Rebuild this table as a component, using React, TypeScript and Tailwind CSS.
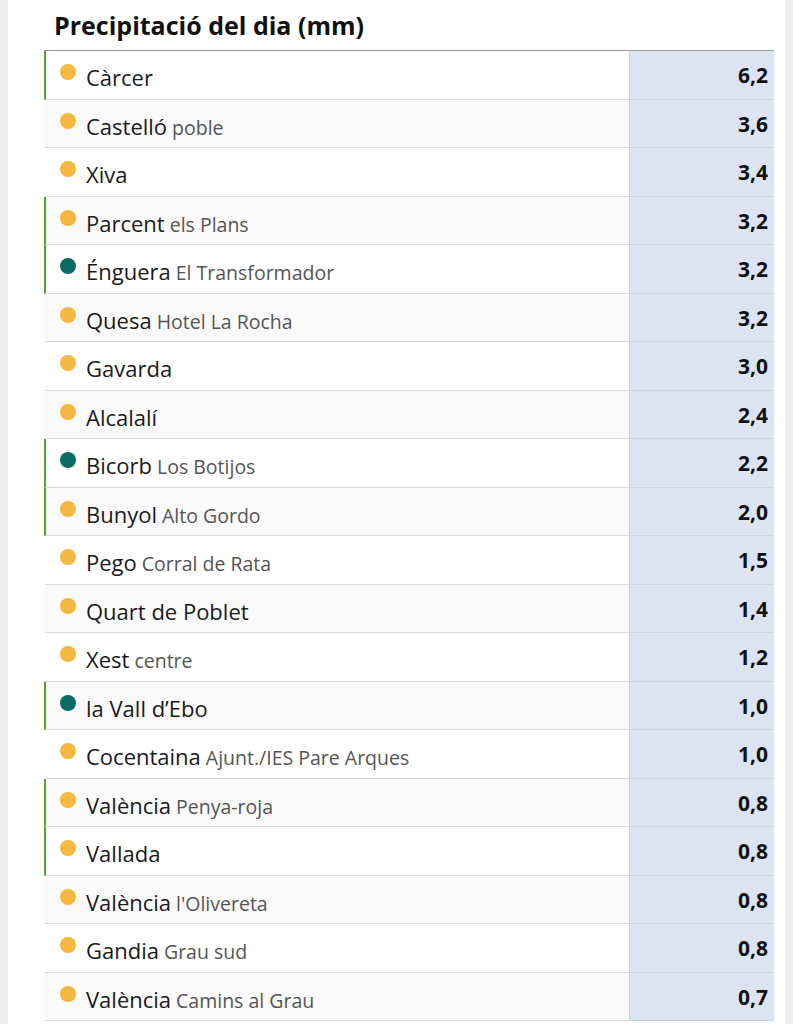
const rows: Array<{ name: string; sub?: string; value: string; dot: 'orange' | 'teal'; mark?: boolean }> = [
  { name: 'Càrcer', value: '6,2', dot: 'orange', mark: true },
  { name: 'Castelló', sub: 'poble', value: '3,6', dot: 'orange' },
  { name: 'Xiva', value: '3,4', dot: 'orange' },
  { name: 'Parcent', sub: 'els Plans', value: '3,2', dot: 'orange', mark: true },
  { name: 'Énguera', sub: 'El Transformador', value: '3,2', dot: 'teal', mark: true },
  { name: 'Quesa', sub: 'Hotel La Rocha', value: '3,2', dot: 'orange' },
  { name: 'Gavarda', value: '3,0', dot: 'orange' },
  { name: 'Alcalalí', value: '2,4', dot: 'orange' },
  { name: 'Bicorb', sub: 'Los Botijos', value: '2,2', dot: 'teal', mark: true },
  { name: 'Bunyol', sub: 'Alto Gordo', value: '2,0', dot: 'orange', mark: true },
  { name: 'Pego', sub: 'Corral de Rata', value: '1,5', dot: 'orange' },
  { name: 'Quart de Poblet', value: '1,4', dot: 'orange' },
  { name: 'Xest', sub: 'centre', value: '1,2', dot: 'orange' },
  { name: 'la Vall d’Ebo', value: '1,0', dot: 'teal', mark: true },
  { name: 'Cocentaina', sub: 'Ajunt./IES Pare Arques', value: '1,0', dot: 'orange' },
  { name: 'València', sub: 'Penya-roja', value: '0,8', dot: 'orange', mark: true },
  { name: 'Vallada', value: '0,8', dot: 'orange', mark: true },
  { name: 'València', sub: "l'Olivereta", value: '0,8', dot: 'orange' },
  { name: 'Gandia', sub: 'Grau sud', value: '0,8', dot: 'orange' },
  { name: 'València', sub: 'Camins al Grau', value: '0,7', dot: 'orange' },
];

export default function App() {
  return (
    <div className="min-h-screen bg-[#ececec] px-[8px]" style={{ fontFamily: '"Open Sans", sans-serif' }}>
      <div className="min-h-screen bg-white pl-[36px] pr-[11px]">
        {/* Title */}
        <h1 className="h-[50px] pl-[10px] pt-[9px] text-[25px] leading-[32px] font-bold text-[#111]">
          Precipitació del dia (mm)
        </h1>

        {/* Table */}
        <div className="border-t border-[#9a9a9a]">
          {rows.map((r, i) => (
            <div key={i} className="flex h-[48.5px]">
              <div
                className={`flex flex-1 items-start border-b border-[#dadada] border-l-2 pl-[14px] ${
                  r.mark ? 'border-l-[#5aa02c]' : 'border-l-transparent'
                } ${i % 2 === 1 ? 'bg-[#fafafa]' : 'bg-white'}`}
              >
                <span
                  className={`mt-[13px] h-[16px] w-[16px] shrink-0 rounded-full ${
                    r.dot === 'teal' ? 'bg-[#0b6b66]' : 'bg-[#f4b73f]'
                  }`}
                />
                <span className="ml-[10px] mt-[13px] text-[22px] leading-[26px] text-[#1a1a1a] whitespace-nowrap">
                  {r.name}
                  {r.sub && <span className="ml-[5px] text-[19.5px] text-[#555]">{r.sub}</span>}
                </span>
              </div>
              <div className="flex w-[145px] items-start justify-end border-b border-l border-[#ccd3df] bg-[#dde4f1] pr-[6px] pt-[11px]">
                <span className="text-[21px] leading-[26px] font-bold text-[#111]">{r.value}</span>
              </div>
            </div>
          ))}
        </div>
      </div>
    </div>
  );
}
